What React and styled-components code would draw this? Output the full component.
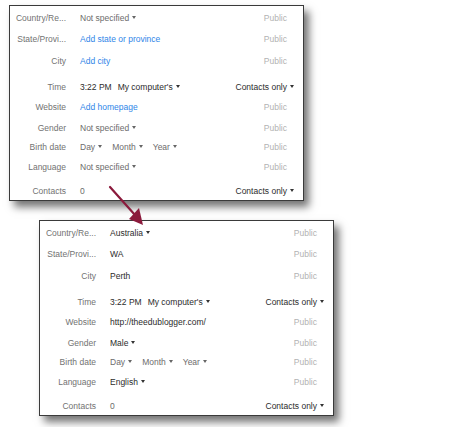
import React from 'react';
import styled, { createGlobalStyle } from 'styled-components';

const Global = createGlobalStyle`
  html, body {
    margin: 0;
    padding: 0;
    background: #fff;
  }
  body {
    font-family: "Segoe UI", "Liberation Sans", Arial, sans-serif;
    font-size: 8.5px;
  }
`;

const Page = styled.div`
  position: relative;
  width: 450px;
  height: 427px;
  padding-top: 5px;
  box-sizing: border-box;
  overflow: hidden;
`;

const Panel = styled.div`
  margin-left: ${p => p.$left}px;
  margin-top: ${p => p.$top || 0}px;
  width: 295px;
  height: 196px;
  box-sizing: border-box;
  border: 1px solid #3a3a3a;
  background: #fff;
  box-shadow: 5px 6px 8px rgba(0, 0, 0, 0.55);
  padding: 1px 0 0 5px;
`;

const Row = styled.div`
  display: flex;
  align-items: center;
  height: 20px;
  margin-top: ${p => p.$space}px;
`;

const Label = styled.div`
  width: 51px;
  flex: none;
  text-align: right;
  white-space: nowrap;
  color: #727272;
`;

const Values = styled.div`
  flex: 1;
  display: flex;
  align-items: center;
  gap: ${p => p.$gap || 0}px;
  margin-left: 14px;
  white-space: nowrap;
`;

const Text = styled.span`
  color: ${p => (p.$tone === 'dark' ? '#2b2b2b' : p.$tone === 'link' ? '#2f86e8' : '#6c6c6c')};
`;

const Caret = styled.span`
  display: inline-block;
  width: 0;
  height: 0;
  margin-left: 3px;
  vertical-align: middle;
  border-left: 2.5px solid transparent;
  border-right: 2.5px solid transparent;
  border-top: 3px solid ${p => p.$color || '#555'};
  position: relative;
  top: -1px;
`;

const Privacy = styled.div`
  flex: none;
  white-space: nowrap;
  color: ${p => (p.$strong ? '#2b2b2b' : '#b2b2b2')};
  margin-right: ${p => (p.$strong ? 9 : 16)}px;
`;

const ArrowLayer = styled.svg`
  position: absolute;
  left: 0;
  top: 0;
  pointer-events: none;
`;

function Drop({ children, tone }) {
  return (
    <Text $tone={tone}>
      {children}
      <Caret $color={tone === 'dark' ? '#333' : '#666'} />
    </Text>
  );
}

function Field({ label, space, gap, privacy = 'Public', children }) {
  const strong = privacy !== 'Public';
  return (
    <Row $space={space}>
      <Label>{label}</Label>
      <Values $gap={gap}>{children}</Values>
      <Privacy $strong={strong}>
        {privacy}
        {strong && <Caret $color="#333" />}
      </Privacy>
    </Row>
  );
}

function Profile({ left, top, filled }) {
  return (
    <Panel $left={left} $top={top}>
      <Field label="Country/Re..." space={1}>
        {filled ? <Drop tone="dark">Australia</Drop> : <Drop>Not specified</Drop>}
      </Field>
      <Field label="State/Provi..." space={1}>
        {filled ? <Text $tone="dark">WA</Text> : <Text $tone="link">Add state or province</Text>}
      </Field>
      <Field label="City" space={2}>
        {filled ? <Text $tone="dark">Perth</Text> : <Text $tone="link">Add city</Text>}
      </Field>
      <Field label="Time" space={6} gap={6} privacy="Contacts only">
        <Text $tone="dark">3:22 PM</Text>
        <Drop tone="dark">My computer's</Drop>
      </Field>
      <Field label="Website" space={0}>
        {filled ? (
          <Text $tone="dark">http://theedublogger.com/</Text>
        ) : (
          <Text $tone="link">Add homepage</Text>
        )}
      </Field>
      <Field label="Gender" space={1}>
        {filled ? <Drop tone="dark">Male</Drop> : <Drop>Not specified</Drop>}
      </Field>
      <Field label="Birth date" space={-1} gap={10}>
        <Drop>Day</Drop>
        <Drop>Month</Drop>
        <Drop>Year</Drop>
      </Field>
      <Field label="Language" space={0}>
        {filled ? <Drop tone="dark">English</Drop> : <Drop>Not specified</Drop>}
      </Field>
      <Field label="Contacts" space={4} privacy="Contacts only">
        <Text>0</Text>
      </Field>
    </Panel>
  );
}

export default function App() {
  return (
    <>
      <Global />
      <Page>
        <Profile left={9} />
        <Profile left={39} top={19} filled />
        <ArrowLayer width="450" height="427" viewBox="0 0 450 427">
          <line x1="110" y1="187" x2="135" y2="215" stroke="#8b1a3c" strokeWidth="2.2" strokeLinecap="round" />
          <polygon points="143,225 129,219 139,208" fill="#8b1a3c" />
        </ArrowLayer>
      </Page>
    </>
  );
}
